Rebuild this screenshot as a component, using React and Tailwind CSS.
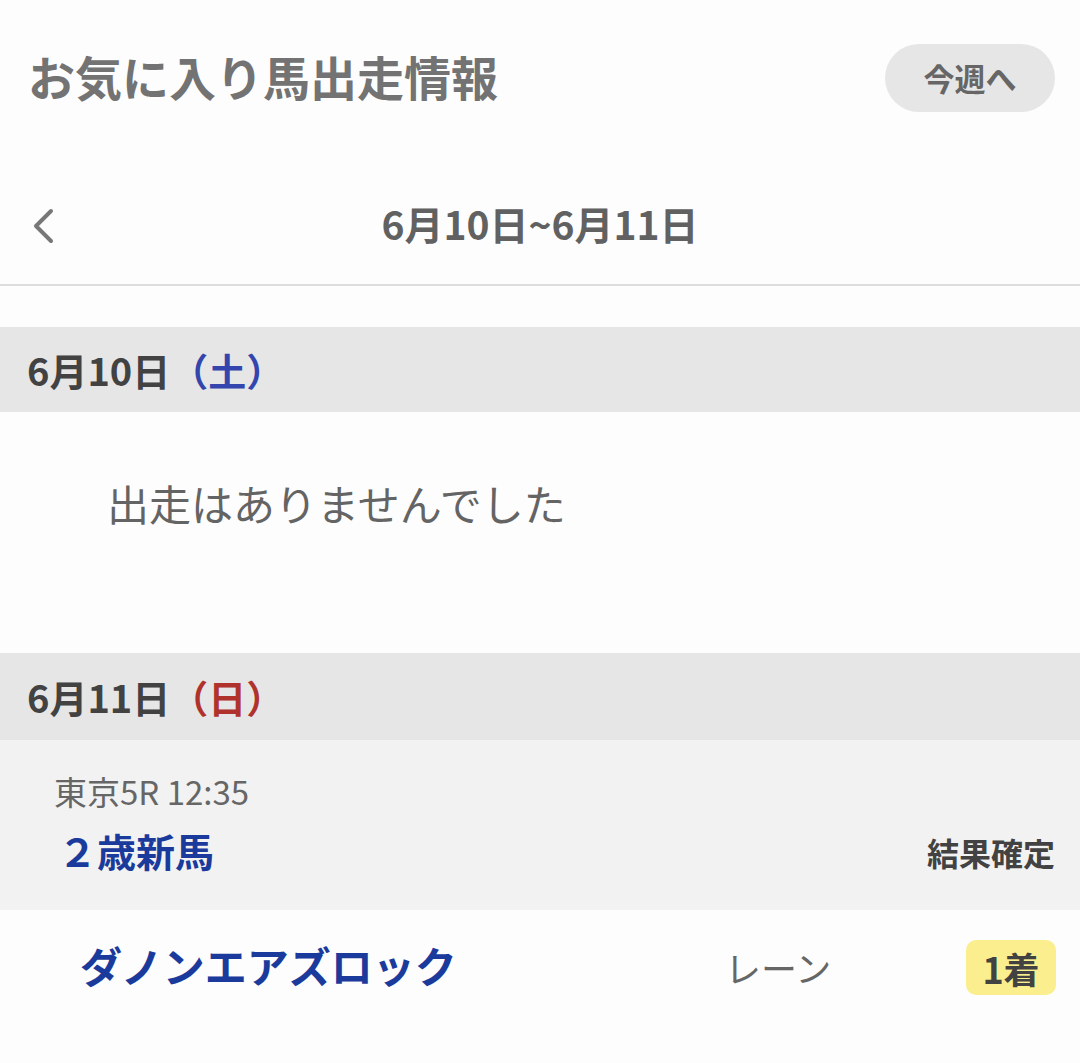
import React from "react";

const FONT = { fontFamily: '"Noto Sans CJK JP", "Noto Sans", sans-serif' };

export default function App() {
  return (
    <div className="w-[1080px] min-h-[1063px] bg-[#fdfdfd]" style={FONT}>
      {/* Header */}
      <div className="flex items-center justify-between pl-[28px] pr-[25px] pt-[44px]">
        <h1 className="text-[47px] leading-[68px] font-bold text-[#737373] -mt-[4px]">
          お気に入り馬出走情報
        </h1>
        <button className="h-[68px] w-[170px] rounded-full bg-[#e6e6e6] text-[31px] font-bold text-[#666666] flex items-center justify-center">
          今週へ
        </button>
      </div>

      {/* Week navigation */}
      <div className="relative mt-[56px] h-[118px] flex items-center justify-center border-b-2 border-[#dddddd]">
        <svg
          className="absolute left-[30px] top-[38px]"
          width="28"
          height="40"
          viewBox="0 0 28 40"
          fill="none"
        >
          <path
            d="M21 5 L6 20 L21 35"
            stroke="#777777"
            strokeWidth="4"
            strokeLinecap="round"
            strokeLinejoin="round"
          />
        </svg>
        <div className="text-[39px] font-bold text-[#616161] -mt-[6px]">
          6月10日~6月11日
        </div>
      </div>

      {/* Day 1 */}
      <div className="mt-[41px] h-[85px] bg-[#e6e6e6] flex items-center pl-[27px]">
        <span className="text-[38px] font-bold text-[#424242]">6月10日</span>
        <span className="text-[38px] font-bold text-[#3446ad]">（土）</span>
      </div>
      <div className="h-[241px] pt-[68px] pl-[107px]">
        <p className="text-[42px] leading-[46px] text-[#646464]">出走はありませんでした</p>
      </div>

      {/* Day 2 */}
      <div className="h-[87px] bg-[#e6e6e6] flex items-center pl-[27px]">
        <span className="text-[38px] font-bold text-[#424242]">6月11日</span>
        <span className="text-[38px] font-bold text-[#b0322c]">（日）</span>
      </div>

      {/* Race card */}
      <div className="bg-[#f2f2f2] pt-[32px] pb-[33px] pl-[54px] pr-[25px]">
        <div className="text-[33px] leading-[38px] text-[#666666]">東京5R 12:35</div>
        <div className="mt-[13px] flex items-center justify-between">
          <div className="text-[39px] leading-[50px] font-bold text-[#1b3b9c] pl-[4px]">２歳新馬</div>
          <div className="text-[32px] leading-[50px] font-bold text-[#424242] mt-[4px]">結果確定</div>
        </div>
      </div>

      {/* Horse row */}
      <div className="flex items-center pt-[30px] pl-[80px] pr-[24px]">
        <div className="flex-1 text-[42px] leading-[55px] font-bold text-[#1b3b9c] -mt-[6px]">
          ダノンエアズロック
        </div>
        <div className="w-[241px] text-[36px] leading-[55px] text-[#666666]">レーン</div>
        <div className="h-[55px] w-[90px] rounded-[10px] bg-[#fbee8f] flex items-center justify-center text-[36px] font-bold text-[#424242]">
          1着
        </div>
      </div>
    </div>
  );
}
